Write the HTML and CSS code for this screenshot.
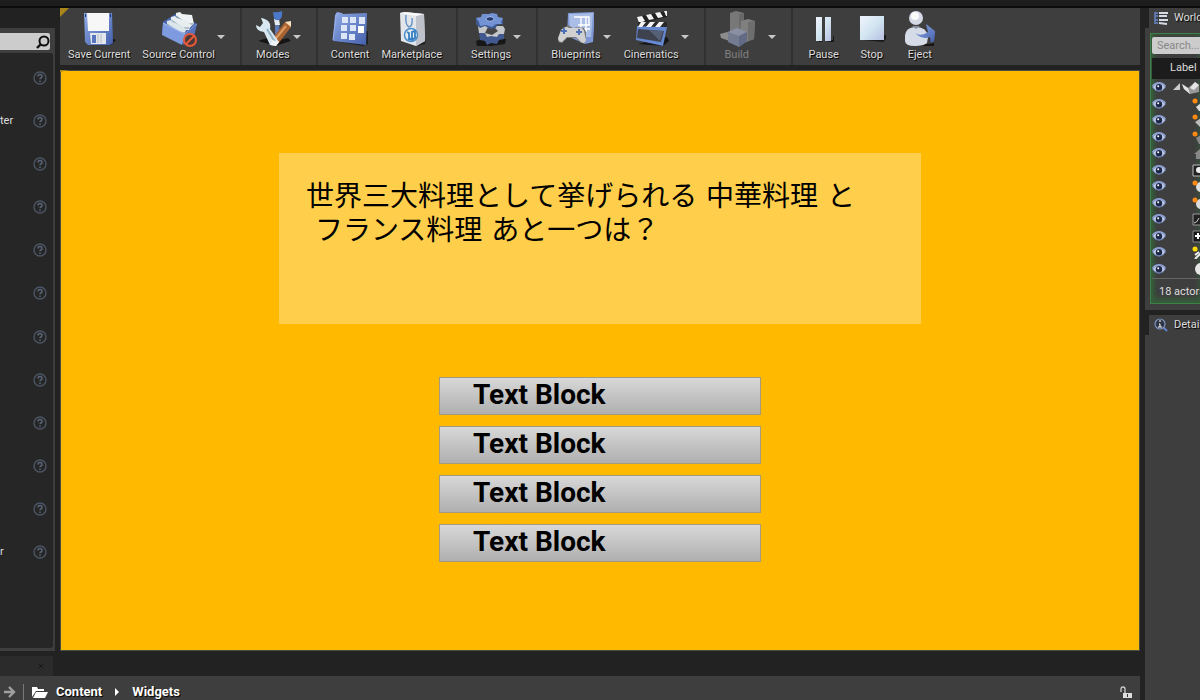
FILE: index.html
```
<!DOCTYPE html>
<html lang="ja">
  <head>
    <title>Unreal Editor</title>
    <meta charset="UTF-8" />
    <link rel="stylesheet" href="styles.css">
  </head>
  <body>
    <svg class="defs" aria-hidden="true">
      <defs>
        <linearGradient id="blue" x1="0" y1="0" x2="1" y2="1">
          <stop offset="0" stop-color="#8fabe6" />
          <stop offset="1" stop-color="#4560ac" />
        </linearGradient>
        <linearGradient id="pale" x1="0" y1="0" x2="1" y2="1">
          <stop offset="0" stop-color="#f0f3fc" />
          <stop offset="0.5" stop-color="#d2e6f1" />
          <stop offset="1" stop-color="#b9bfe2" />
        </linearGradient>
        <symbol id="help" viewBox="0 0 14 14">
          <circle cx="7" cy="7" r="6" fill="none" stroke="#4b5563" stroke-width="1.4" />
          <path d="M5 5.6q0-2 2-2t2 1.8q0 1-1 1.6t-1 1.2M7 9.6v1.4" fill="none" stroke="#5a6677" stroke-width="1.5" />
        </symbol>
        <symbol id="eye" viewBox="0 0 14 10">
          <path d="M.5 5Q3 1 7 1T13.500 5Q11 9.200 7 9.200T.5 5z" fill="#c3cce6" stroke="#6478ad" />
          <path d="M.6 4.200Q3 .8 7 .8t6.400 3.400" fill="none" stroke="#8fa2d4" stroke-width="1.400" />
          <circle cx="7" cy="5.200" r="3.200" fill="#1d2748" />
          <circle cx="6.200" cy="4.200" r="1" fill="#fff" />
        </symbol>
        <symbol id="arrow" viewBox="0 0 10 6">
          <path d="M1 1h8L5 5z" fill="#c8c8c8" />
        </symbol>
      </defs>
    </svg>

    <div class="titlebar"></div>
    <div class="editor">
      <div class="main">
        <div class="upper">
          <aside class="modes">
            <div class="modes-panel">
              <div class="modes-search">
                <input type="text" aria-label="Search classes" />
                <svg viewBox="0 0 14 14" width="14" height="14"><circle cx="8" cy="6" r="4.500" fill="none" stroke="#111" stroke-width="2" /><path d="M5 9L1 13" stroke="#111" stroke-width="2.400" /></svg>
              </div>
              <ul class="class-list">
                <li><span></span><button aria-label="Help"><svg><use href="#help" /></svg></button></li>
                <li><span>ter</span><button aria-label="Help"><svg><use href="#help" /></svg></button></li>
                <li><span></span><button aria-label="Help"><svg><use href="#help" /></svg></button></li>
                <li><span></span><button aria-label="Help"><svg><use href="#help" /></svg></button></li>
                <li><span></span><button aria-label="Help"><svg><use href="#help" /></svg></button></li>
                <li><span></span><button aria-label="Help"><svg><use href="#help" /></svg></button></li>
                <li><span></span><button aria-label="Help"><svg><use href="#help" /></svg></button></li>
                <li><span></span><button aria-label="Help"><svg><use href="#help" /></svg></button></li>
                <li><span></span><button aria-label="Help"><svg><use href="#help" /></svg></button></li>
                <li><span></span><button aria-label="Help"><svg><use href="#help" /></svg></button></li>
                <li><span></span><button aria-label="Help"><svg><use href="#help" /></svg></button></li>
                <li><span>r</span><button aria-label="Help"><svg><use href="#help" /></svg></button></li>
              </ul>
            </div>
          </aside>

          <div class="level">
            <div class="toolbar corner">
              <div class="group">
                <button class="tool">
                  <svg viewBox="0 0 36 36">
                    <path d="M30 27l5 2-5 5H12z" fill="#161616" />
                    <path d="M3 2h28l1 30-3 2H7l-3-3z" fill="url(#blue)" />
                    <path d="M6 2h22l0 18H7z" fill="#f7f7f7" />
                    <path d="M4 3h1v3H4zM29 3h1v3h-1z" fill="#22336b" />
                    <path d="M9 22h16v11H10z" fill="#e4e7ec" />
                    <path d="M11 24h4v8h-4z" fill="#5876c0" />
                    <path d="M17 23v9M20 23v9" stroke="#b4b8c4" />
                  </svg>
                  <span>Save Current</span>
                </button>
                <button class="tool">
                  <svg viewBox="0 0 36 36">
                    <path d="M2 11l14-9 20 11-3 12-8 9L1 23z" fill="#4b68b3" />
                    <path d="M15 5V2l4-1 2 2 10 1 2 9-5 4z" fill="#eef3f3" />
                    <path d="M15 5l12 8 6 0" fill="none" stroke="#7f949d" />
                    <path d="M10 9V6l4-1 2 2 10 3 4 4-2 5-6 0z" fill="#e6eef0" />
                    <path d="M10 9l12 8 6 0" fill="none" stroke="#7f949d" />
                    <path d="M6 13v-3l4-1 2 2 10 4 3 4-2 5-5-1z" fill="#dbe6ea" />
                    <path d="M6 13l12 8 6 1" fill="none" stroke="#7f949d" />
                    <path d="M2 12l22 11-3 11L1 24z" fill="#7f9be0" />
                    <path d="M2 12l22 11 12-10" fill="none" stroke="#a6bbf0" />
                    <path d="M24 23l12-10-3 11-11 10z" fill="#5974bd" />
                    <circle cx="29" cy="29" r="6" fill="#4c3935" stroke="#e5593a" stroke-width="2" />
                    <path d="M25 33l8-8" stroke="#e5593a" stroke-width="2" />
                  </svg>
                  <span>Source Control</span>
                </button>
                <button class="drop" aria-label="Source control options"><svg><use href="#arrow" /></svg></button>
              </div>
              <div class="group">
                <button class="tool">
                  <svg viewBox="0 0 36 36">
                    <path d="M3 30l9-3 4 4 17-4 3 3-16 5-6-2z" fill="#151515" />
                    <path d="M20 12h4l1 12-5 2z" fill="#617ab6" />
                    <path d="M19 8h5l1 6h-5z" fill="#e6ebef" />
                    <path d="M18 1q4 1 9-1 1 7-3 9-4 1-5-2z" fill="#4c78c9" />
                    <path d="M30 11l6 0 0 5-13 17-6 1 1-7z" fill="#a96232" />
                    <path d="M30 11l6-1 0 6z" fill="#f7e3bd" />
                    <path d="M31 15L18 31" stroke="#dc9b60" stroke-width="2" />
                    <path d="M6 7l2 5-3 4-4-2q0 6 8 7l6 13 6 1 3-4-9-13q2-9-9-11z" fill="#d8e7f0" />
                    <path d="M12 18l8 13" stroke="#91b0c3" stroke-width="2" />
                    <path d="M17 29l7 2-3 4-5-1z" fill="#f2f5f6" />
                  </svg>
                  <span>Modes</span>
                </button>
                <button class="drop" aria-label="Mode options"><svg><use href="#arrow" /></svg></button>
              </div>
              <div class="group">
                <button class="tool">
                  <svg viewBox="0 0 36 36">
                    <path d="M1 30l30 5 5-2V20z" fill="#202020" />
                    <path d="M3 4l2-3 5 1 1 1 24-1-1 32L1 30z" fill="url(#blue)" />
                    <path d="M1 29L4 5l3-3" fill="none" stroke="#9ab3ed" />
                    <path d="M10 6h6v6h-6zM18 6h6v6h-6zM27 6h6v7h-6zM9 14h6v6H9zM18 14h6v6h-6zM9 22h6v6H9zM17 23h6v6h-6z" fill="#dce6f6" />
                    <path d="M26 15h6v7h-6z" fill="#fff" />
                  </svg>
                  <span>Content</span>
                </button>
                <button class="tool">
                  <svg viewBox="0 0 36 36">
                    <path d="M29 30l3-2-1 5-8 2z" fill="#222" />
                    <path d="M6 2l4-1 20 2 1 27-9 5L7 30z" fill="#e2e5e9" />
                    <path d="M22 5l8-2 1 27-9 5z" fill="#bfc2ca" />
                    <path d="M6 2l16 3 8-2-18-2z" fill="#f8f8f8" />
                    <path d="M12 4q-1 10 3 12 4-1 3-9" fill="none" stroke="#6293c7" stroke-width="1.400" />
                    <circle cx="17" cy="24" r="6.500" fill="#e4ecf3" stroke="#4c8fcc" stroke-width="1.500" />
                    <path d="M13 21l2 1v5q2 2 3 0v-6l3-1v7M14 28l4 1 4-3" fill="none" stroke="#357fc2" stroke-width="1.800" />
                  </svg>
                  <span>Marketplace</span>
                </button>
              </div>
              <div class="group">
                <button class="tool">
                  <svg viewBox="0 0 36 36">
                    <path d="M3 30l10-4 20 2-1 5-14 2H4z" fill="#171717" />
                    <path d="M6 22l25 0 0 6-5 1-2 4-6-1-4 2-2-4-5-1z" fill="#41598f" />
                    <path d="M5 15h25l2 3-1 5-5 0-2 3-6-1-4 1-2-4-6 0z" fill="#c4c6c9" />
                    <path d="M12 22l3-6h6l4 4-6 4z" fill="#454545" />
                    <path d="M3 7v6l4 4 5-2 5 3 6-1 1-3 6-1V8z" fill="#3f5994" />
                    <path d="M3 7l5-1 1-3 7 0 3-1 5 1 1 3 5 1-2 4 1 2-6 0-4 3-6-2-6 1-1-4z" fill="#7393d4" />
                    <ellipse cx="17" cy="8" rx="4" ry="2.300" fill="#283c6c" stroke="#a3baf0" />
                  </svg>
                  <span>Settings</span>
                </button>
                <button class="drop" aria-label="Settings options"><svg><use href="#arrow" /></svg></button>
              </div>
              <div class="group">
                <button class="tool">
                  <svg viewBox="0 0 36 36">
                    <path d="M10 2l27-1-2 30-8 2-18-8z" fill="#7f98d4" />
                    <path d="M11 3l24-1-2 24-21 0z" fill="#aabde6" />
                    <path d="M16 6h15v8H20M23 6v15M28 6v15M20 14h12M23 18h9" fill="none" stroke="#fff" stroke-width="1.400" />
                    <path d="M0 31l6-14 4-3 5 3 6-1 5 1 2 4 0 7-1 4-4 0-5-5H9l-5 5z" fill="#777" />
                    <path d="M0 27l3-8q4-5 8-2l8 0q5-2 7 3l2 9q-1 5-5 2l-5-5H9l-5 5q-4 0-4-4z" fill="#d0d0d0" />
                    <path d="M6 17v6M3 20h6M21 18v6M18 21h6" stroke="#4f70b7" stroke-width="2" />
                  </svg>
                  <span>Blueprints</span>
                </button>
                <button class="drop" aria-label="Blueprint options"><svg><use href="#arrow" /></svg></button>
                <button class="tool">
                  <svg viewBox="0 0 36 36">
                    <path d="M5 33l25 2 6-5-2-4z" fill="#161616" />
                    <path d="M4 15l30 1-4 19-27-6z" fill="#6688d0" />
                    <path d="M5 18l26 2-3 11-24-4z" fill="#3d424e" />
                    <path d="M16 19l14 1-3 10z" fill="#566077" />
                    <path d="M4 6L34 0v6L6 13z" fill="#222" />
                    <path d="M4 6l5-1 3 5-6 2zM13 4l5-1 3 5-5 1zM22 2l5-1 3 5-5 1zM31 0l3 0v5l-1 0z" fill="#f3f3f3" />
                    <path d="M5 11h29v5L5 15z" fill="#292929" />
                    <path d="M8 11h5l-4 5H5zM17 11h5l-4 5h-5zM26 11h5l-4 5h-5z" fill="#f3f3f3" />
                  </svg>
                  <span>Cinematics</span>
                </button>
                <button class="drop" aria-label="Cinematics options"><svg><use href="#arrow" /></svg></button>
              </div>
              <div class="group build-group">
                <button class="tool" disabled>
                  <svg viewBox="0 0 36 36">
                    <path d="M11 2l6-2 8 2v24H11z" fill="#787878" />
                    <path d="M20 3l5-1v22h-5z" fill="#696969" />
                    <path d="M22 10l7-2 7 2-1 18-10 4-4-3z" fill="#808080" />
                    <path d="M29 11l7-1-1 18-6 2z" fill="#6e6e6e" />
                    <path d="M1 23l7-2 8 3v8L2 27z" fill="#8c8c8c" />
                    <path d="M9 21l9-4 10 4v9l-8 6-11-5z" fill="#747a90" />
                    <path d="M9 21l9-4 10 4-8 4z" fill="#8a90a2" />
                    <path d="M20 25l8-4v9l-8 6z" fill="#636a86" />
                  </svg>
                  <span>Build</span>
                </button>
                <button class="drop" aria-label="Build options"><svg><use href="#arrow" /></svg></button>
              </div>
              <div class="group">
                <button class="tool">
                  <svg viewBox="0 0 36 36">
                    <path d="M13 29h3v2h-3zM22 29h5v-4h1v6h-6z" fill="#191919" />
                    <path d="M10 6h6v24h-6zM19 6h6v24h-6z" fill="url(#pale)" />
                  </svg>
                  <span>Pause</span>
                </button>
                <button class="tool">
                  <svg viewBox="0 0 36 36">
                    <path d="M9 29h21v-5l2 0v4l-3 3z" fill="#191919" />
                    <path d="M6 5h24v24H6z" fill="url(#pale)" />
                  </svg>
                  <span>Stop</span>
                </button>
                <button class="tool">
                  <svg viewBox="0 0 36 36">
                    <path d="M8 33h18l6-1 0 3H18z" fill="#171717" />
                    <path d="M3 26q0-10 11-10t12 10l-1 6q-3 3-12 3-10 0-10-5z" fill="#d6dbe8" />
                    <circle cx="14" cy="7" r="7" fill="#d4d9e6" />
                    <circle cx="13" cy="5" r="4" fill="#fafafa" />
                    <path d="M10 15h8l-4 3z" fill="#87909f" />
                    <path d="M13 22q6 4 13-1l-2-8 9 7 0 3-1 7-3 2-1-6q-8 3-15-4z" fill="url(#blue)" />
                  </svg>
                  <span>Eject</span>
                </button>
              </div>
            </div>

            <main class="viewport corner">
              <p class="question">世界三大料理として挙げられる 中華料理 と
 フランス料理 あと一つは？</p>
              <div class="answers">
                <button>Text Block</button>
                <button>Text Block</button>
                <button>Text Block</button>
                <button>Text Block</button>
              </div>
            </main>
          </div>
        </div>

        <div class="browser">
          <div class="browser-tab"><button aria-label="Close tab"><svg viewBox="0 0 8 8" width="6" height="6"><path d="M1 1l6 6M7 1L1 7" stroke="#161616" stroke-width="1.300" /></svg></button></div>
          <div class="path-bar">
            <button aria-label="Forward"><svg viewBox="0 0 12 12" width="12" height="12"><path d="M0 6h9M5 1l5 5-5 5" fill="none" stroke="#a0a0a0" stroke-width="2.400" /></svg></button>
            <nav class="path">
              <svg viewBox="0 0 16 12" width="16" height="12"><path d="M0 11V1h5l1 2h6v2H4z" fill="#fff" /><path d="M4 6h12l-3 6H1z" fill="#fff" /></svg>
              <a href="#">Content</a>
              <svg viewBox="0 0 6 8" width="6" height="8"><path d="M1 0l4 4-4 4z" fill="#fff" /></svg>
              <a href="#">Widgets</a>
            </nav>
            <button aria-label="Lock"><svg viewBox="0 0 12 12" width="12" height="12"><path d="M1 6V3q0-2 2-2t2 2v4" fill="none" stroke="#ccc" stroke-width="1.300" /><path d="M3 7h9v5H3z" fill="#ddd" /><path d="M7 8h1v3H7z" fill="#333" /></svg></button>
          </div>
        </div>
      </div>

      <aside class="side">
        <section class="outliner">
          <h2 class="tab">
            <svg viewBox="0 0 14 14" width="14" height="14"><path d="M1 1v12M1 2h3M1 5h3M1 9h3M1 12h3" fill="none" stroke="#6683c2" stroke-width="1.500" /><path d="M5 2h9M5 5h8M5 9l9 0M5 12l8 1" stroke="#d5dae5" stroke-width="1.800" /></svg>
            World Outliner
          </h2>
          <div class="panel">
            <div class="actors">
              <input type="text" placeholder="Search..." aria-label="Search actors" />
              <div class="list-head">Label</div>
              <ul class="actor-list">
                <li class="root"><button aria-label="Visibility"><svg><use href="#eye" /></svg></button><svg class="actor" viewBox="0 0 26 14"><path d="M0 10l7-7v7z" fill="#ccc" /><path d="M9 4l6 4 7-6 4 3v7l-9 2-6-5z" fill="#999" /><path d="M9 4l6 4 2 6-6-5zM22 2l4 3-5 5-4-2z" fill="#e4e4e4" /></svg></li>
                <li><button aria-label="Visibility"><svg><use href="#eye" /></svg></button><svg class="actor" viewBox="0 0 14 14"><path d="M4 10l5-4 5 4v4H7z" fill="#ddd" /><circle cx="3" cy="4" r="2.500" fill="#ff8a13" /></svg></li>
                <li><button aria-label="Visibility"><svg><use href="#eye" /></svg></button><svg class="actor" viewBox="0 0 14 14"><path d="M3 9l6-4 5 4v5H8z" fill="#bbb" /><circle cx="3" cy="4" r="2.500" fill="#ff8a13" /></svg></li>
                <li><button aria-label="Visibility"><svg><use href="#eye" /></svg></button><svg class="actor" viewBox="0 0 14 14"><path d="M4 8l5-3 5 4v5H7z" fill="#888" /><circle cx="3" cy="4" r="2.500" fill="#ff8a13" /></svg></li>
                <li><button aria-label="Visibility"><svg><use href="#eye" /></svg></button><svg class="actor" viewBox="0 0 14 14"><path d="M2 8l6-5 6 5v5H4V8z" fill="#888" /></svg></li>
                <li><button aria-label="Visibility"><svg><use href="#eye" /></svg></button><svg class="actor" viewBox="0 0 14 14"><path d="M1 2h13v11H1z" fill="#222" stroke="#bbb" /><circle cx="7" cy="7" r="3" fill="#eee" /></svg></li>
                <li><button aria-label="Visibility"><svg><use href="#eye" /></svg></button><svg class="actor" viewBox="0 0 14 14"><circle cx="9" cy="8" r="5" fill="#ddd" /><circle cx="3" cy="4" r="2.500" fill="#ff8a13" /></svg></li>
                <li><button aria-label="Visibility"><svg><use href="#eye" /></svg></button><svg class="actor" viewBox="0 0 14 14"><circle cx="9" cy="8" r="5" fill="#ddd" /><circle cx="3" cy="4" r="2.500" fill="#ff8a13" /></svg></li>
                <li><button aria-label="Visibility"><svg><use href="#eye" /></svg></button><svg class="actor" viewBox="0 0 14 14"><path d="M1 2h13v11H1z" fill="#222" stroke="#999" /><path d="M2 11q3 0 5-5" fill="none" stroke="#ccc" /></svg></li>
                <li><button aria-label="Visibility"><svg><use href="#eye" /></svg></button><svg class="actor" viewBox="0 0 14 14"><path d="M1 2h13v11H1z" fill="#181818" stroke="#888" /><path d="M3 7h6M6 4v6" stroke="#fff" stroke-width="2" /></svg></li>
                <li><button aria-label="Visibility"><svg><use href="#eye" /></svg></button><svg class="actor" viewBox="0 0 14 14"><path d="M3 10l4-3M3 14l6-6" stroke="#eee" stroke-width="2" /><circle cx="3" cy="4" r="2.500" fill="#ffdc00" /></svg></li>
                <li><button aria-label="Visibility"><svg><use href="#eye" /></svg></button><svg class="actor" viewBox="0 0 14 14"><circle cx="9" cy="7" r="6" fill="#e6e6e6" /></svg></li>
              </ul>
              <div class="count">18 actors</div>
            </div>
          </div>
        </section>
        <section class="details">
          <h2 class="tab">
            <svg viewBox="0 0 14 14" width="14" height="14"><path d="M9 9l4 4" stroke="#5f82cf" stroke-width="2" /><circle cx="6" cy="6" r="5" fill="#2e3545" stroke="#7f92c0" stroke-width="1.200" /><path d="M5 3h2M5 6h1v3M4 9h4" fill="none" stroke="#fff" /></svg>
            Details
          </h2>
          <div class="panel"></div>
        </section>
      </aside>
    </div>
  </body>
</html>
```

FILE: styles.css
```
* {
  box-sizing: border-box;
}

body {
  margin: 0;
  height: 100vh;
  display: flex;
  flex-direction: column;
  overflow: hidden;
  background-color: #222;
  color: #ddd;
  font-family: Roboto, "Noto Sans CJK JP", sans-serif;
  font-size: 11px;
  line-height: 14px;
}

ul,
p,
h2 {
  margin: 0;
  padding: 0;
  list-style: none;
}

button {
  margin: 0;
  padding: 0;
  border: 0;
  background: none;
  color: inherit;
  font: inherit;
}

svg {
  display: block;
  flex-shrink: 0;
}

.defs {
  position: absolute;
  width: 0;
  height: 0;
}

.titlebar {
  flex: 0 0 8px;
  background-color: #1d1d1d;
  border-bottom: 2px solid #0c0c0c;
}

.editor {
  flex: 1;
  min-height: 0;
  display: grid;
  grid-template-columns: minmax(0, 1fr) 55px;
  gap: 5px;
}

.main {
  display: flex;
  flex-direction: column;
  min-height: 0;
}

.upper {
  flex: 1;
  display: flex;
  gap: 5px;
  min-height: 0;
}

/* left panel */
.modes {
  width: 55px;
  padding-top: 20px;
}

.modes-panel {
  height: 100%;
  display: flex;
  flex-direction: column;
  padding: 5px 2px 3px 0;
  background-color: #3e3e3e;
}

.modes-search {
  display: flex;
  align-items: center;
  height: 17px;
  margin: 0 3px 3px 0;
  background-color: #ccc;
  border-radius: 0 2px 2px 0;
}

.modes-search input {
  flex: 1;
  min-width: 0;
  border: 0;
  background: none;
}

.class-list {
  flex: 1;
  display: grid;
  grid-auto-rows: 1fr;
  padding: 3px 0 74px;
  background-color: #262626;
  border-radius: 0 3px 3px 0;
}

.class-list li {
  display: flex;
  align-items: center;
  justify-content: space-between;
  padding-right: 6px;
}

.class-list svg {
  width: 14px;
  height: 14px;
}

/* toolbar */
.level {
  flex: 1;
  display: flex;
  flex-direction: column;
  gap: 5px;
  min-width: 0;
}

.corner {
  position: relative;
}

.corner::before {
  content: "";
  position: absolute;
  top: 0;
  left: 0;
  border-top: 9px solid #a9851c;
  border-right: 9px solid transparent;
}

.toolbar {
  display: flex;
  height: 57px;
  background-color: #3e3e3e;
}

.group {
  display: flex;
  padding: 3px 14px 0 13px;
  border-right: 2px solid #303030;
}

.group:first-child {
  padding-left: 8px;
}

.group:last-child {
  border-right: 0;
}

.tool {
  display: flex;
  flex-direction: column;
  align-items: center;
  gap: 1px;
  min-width: 36px;
  text-shadow: 1px 1px 1px #000;
}

.tool svg {
  width: 36px;
  height: 36px;
}

.tool:disabled {
  color: #808080;
  text-shadow: none;
}

.tool + .tool,
.drop + .tool {
  margin-left: 12px;
}

.drop {
  align-self: flex-start;
  margin-top: 23px;
  margin-left: 1px;
}

.drop svg {
  width: 10px;
  height: 6px;
}

.build-group .drop {
  margin-left: 12px;
}

/* game viewport */
.viewport {
  flex: 1;
  display: flex;
  flex-direction: column;
  align-items: center;
  padding-top: 82px;
  background-color: #ffba00;
  border: 1px solid #4c4c44;
}

.viewport::before {
  top: -1px;
  left: -1px;
  border-top-width: 2px;
}

.question {
  width: 60%;
  max-width: 642px;
  height: 171px;
  padding: 27px;
  background-color: #ffce4a;
  color: #000;
  font-family: "DejaVu Sans", "Noto Sans CJK JP", sans-serif;
  font-size: 28px;
  line-height: 34px;
  white-space: pre;
}

.answers {
  width: 30%;
  max-width: 322px;
  margin-top: 53px;
  display: flex;
  flex-direction: column;
  gap: 11px;
}

.answers button {
  height: 38px;
  padding: 0 33px 2px;
  border: 1px solid #a39a80;
  background-image: linear-gradient(#d8d8d8, #afafaf);
  color: #000;
  font-size: 28px;
  font-weight: bold;
  line-height: 32px;
  text-align: left;
}

/* content browser */
.browser-tab {
  display: flex;
  align-items: center;
  justify-content: flex-end;
  width: 53px;
  height: 20px;
  margin-top: 5px;
  padding-right: 9px;
  background-color: #2b2b2b;
}

.path-bar {
  display: flex;
  align-items: center;
  height: 24px;
  padding: 8px 8px 0 4px;
  background-color: #3e3e3e;
}

.path {
  flex: 1;
  display: flex;
  align-items: center;
  gap: 12px;
  margin-left: 7px;
  padding-left: 8px;
  border-left: 1px solid #777;
}

.path svg:first-child {
  margin-right: -4px;
}

.path a {
  color: #fff;
  font-size: 13px;
  font-weight: bold;
  line-height: 16px;
  text-decoration: none;
  text-shadow: 1px 1px 1px #000;
}

/* right side */
.side {
  display: flex;
  flex-direction: column;
  gap: 5px;
  min-width: 0;
  overflow: hidden;
}

.tab {
  display: flex;
  align-items: center;
  gap: 6px;
  height: 20px;
  margin-left: 4px;
  padding-left: 5px;
  background-color: #3e3e3e;
  font-size: 11px;
  font-weight: normal;
  white-space: nowrap;
  text-shadow: 1px 1px 1px #000;
}

.panel {
  background-color: #3e3e3e;
}

.outliner .panel {
  padding: 5px 0 6px 5px;
}

.actors {
  border: 1px solid #3d7f45;
  border-right: 0;
  padding: 3px 0 0 1px;
  box-shadow: inset 3px 0 4px #35603a, inset 0 -4px 6px #35603a;
}

.actors input {
  display: block;
  width: 100%;
  height: 17px;
  padding: 0 0 0 5px;
  border: 0;
  border-radius: 2px 0 0 2px;
  background-color: #ccc;
  font: inherit;
}

.actors input::placeholder {
  color: #888;
}

.list-head {
  height: 21px;
  margin-top: 4px;
  padding: 3px 0 0 18px;
  background-color: #1c1c1c;
  white-space: nowrap;
}

.actor-list {
  display: grid;
  grid-auto-rows: 1fr;
  height: 198px;
}

.actor-list li {
  display: flex;
  align-items: center;
  overflow: hidden;
}

.actor-list button svg {
  width: 14px;
  height: 10px;
}

.actor {
  width: 14px;
  height: 14px;
  margin-left: 26px;
}

.root .actor {
  width: 26px;
  margin-left: 7px;
}

.count {
  height: 25px;
  margin-top: 1px;
  padding: 6px 0 0 7px;
  border-top: 1px solid #666;
  white-space: nowrap;
}

.details {
  flex: 1;
  display: flex;
  flex-direction: column;
}

.details .panel {
  flex: 1;
}
```
